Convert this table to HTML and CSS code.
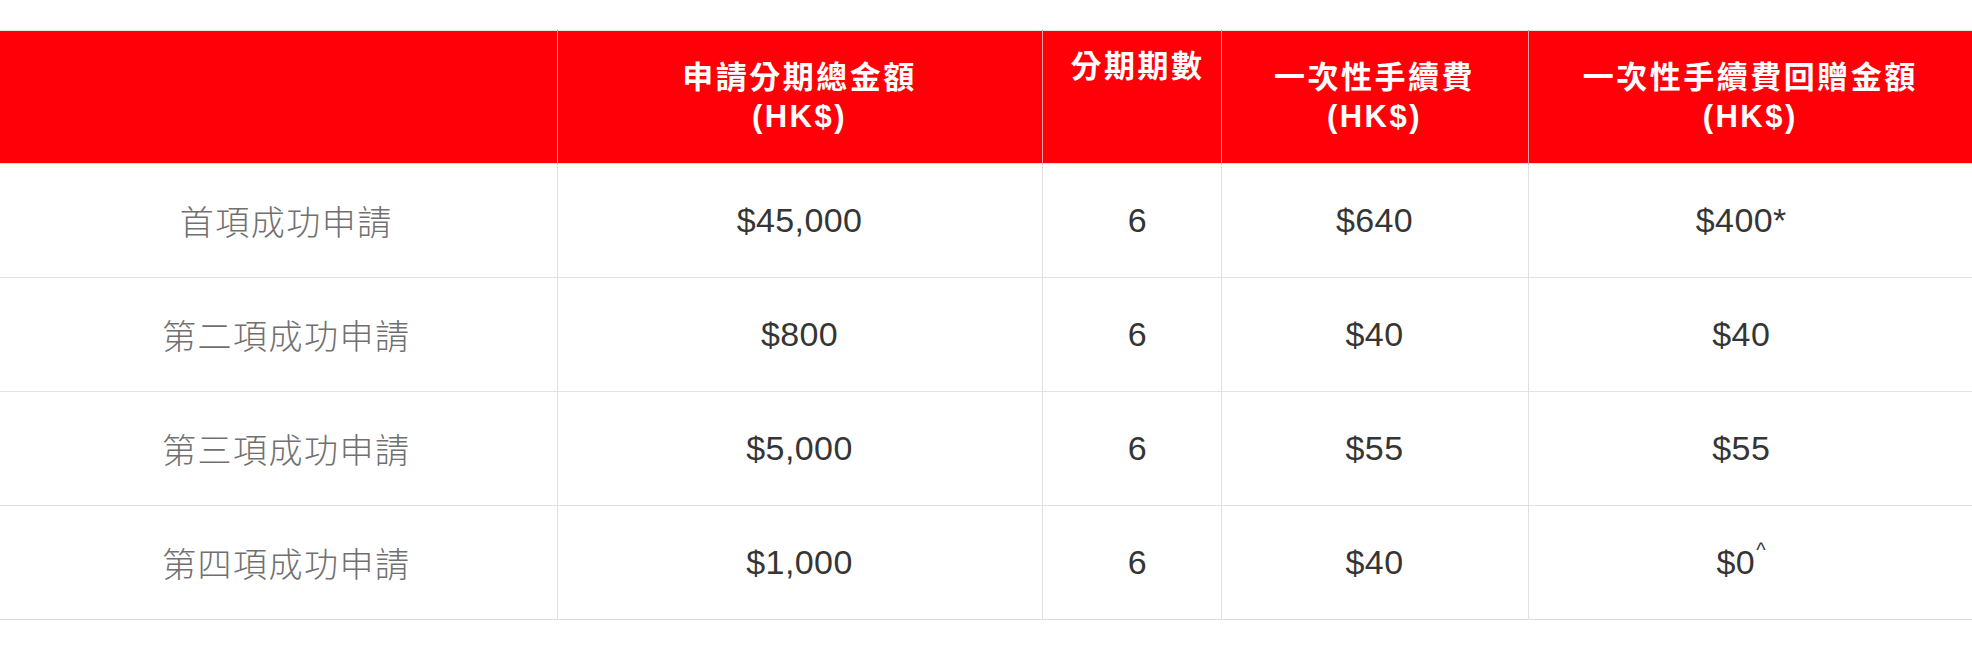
FILE: index.html
```html
<!DOCTYPE html>
<html lang="zh-Hant">
<head>
<meta charset="utf-8">
<title>分期計劃</title>
<link rel="stylesheet" href="styles.css">
</head>
<body>
<table class="fee-table">
  <colgroup>
    <col class="c1">
    <col class="c2">
    <col class="c3">
    <col class="c4">
    <col class="c5">
  </colgroup>
  <thead>
    <tr>
      <th></th>
      <th>申請分期總金額<br>(HK$)</th>
      <th class="top terms">分期期數</th>
      <th>一次性手續費<br>(HK$)</th>
      <th>一次性手續費回贈金額<br>(HK$)</th>
    </tr>
  </thead>
  <tbody>
    <tr>
      <td class="label">首項成功申請</td>
      <td>$45,000</td>
      <td class="terms">6</td>
      <td>$640</td>
      <td class="rebate">$400*</td>
    </tr>
    <tr>
      <td class="label">第二項成功申請</td>
      <td>$800</td>
      <td class="terms">6</td>
      <td>$40</td>
      <td class="rebate">$40</td>
    </tr>
    <tr>
      <td class="label">第三項成功申請</td>
      <td>$5,000</td>
      <td class="terms">6</td>
      <td>$55</td>
      <td class="rebate">$55</td>
    </tr>
    <tr>
      <td class="label">第四項成功申請</td>
      <td>$1,000</td>
      <td class="terms">6</td>
      <td>$40</td>
      <td class="rebate">$0<sup class="mark">^</sup></td>
    </tr>
  </tbody>
</table>
</body>
</html>
```

FILE: styles.css
```css
html, body {
  margin: 0;
  padding: 0;
  background: #ffffff;
}

body {
  padding-top: 30px;
  font-family: "Liberation Sans", "Noto Sans CJK TC", sans-serif;
}

.fee-table {
  width: 1972px;
  table-layout: fixed;
  border-collapse: collapse;
  border-top: 1px solid #e2e2e2;
  border-bottom: 1px solid #dcdcdc;
}

.c1 { width: 557px; }
.c2 { width: 485px; }
.c3 { width: 179px; }
.c4 { width: 307px; }
.c5 { width: 444px; }

.fee-table th {
  height: 132px;
  padding: 0 4px;
  background: #ff0008;
  color: #ffffff;
  font-family: "Liberation Sans", "Noto Sans CJK TC", sans-serif;
  font-weight: 700;
  font-size: 31px;
  line-height: 39px;
  letter-spacing: 2.5px;
  text-align: center;
  vertical-align: middle;
  border-left: 1px solid #e8a0a0;
}

.fee-table th:first-child {
  border-left: none;
}

.fee-table th.top {
  height: 116px;
  vertical-align: top;
  padding-top: 16px;
}

.fee-table td {
  height: 113px;
  padding: 0 4px;
  text-align: center;
  vertical-align: middle;
  color: #353535;
  font-size: 34px;
  letter-spacing: 0.4px;
  border-top: 1px solid #e3e3e3;
  border-left: 1px solid #e0e0e0;
}

.fee-table td:first-child {
  border-left: none;
}

.fee-table .terms {
  padding-left: 16px;
}

.fee-table td.rebate {
  padding-right: 22px;
}

.fee-table td.label {
  padding-left: 20px;
  font-family: "Noto Sans CJK TC", sans-serif;
  font-weight: 300;
  color: #707070;
  font-size: 34px;
  letter-spacing: 1.5px;
}

.mark {
  font-size: 20px;
  vertical-align: top;
  position: relative;
  top: -4px;
  margin-left: 1px;
}
```
